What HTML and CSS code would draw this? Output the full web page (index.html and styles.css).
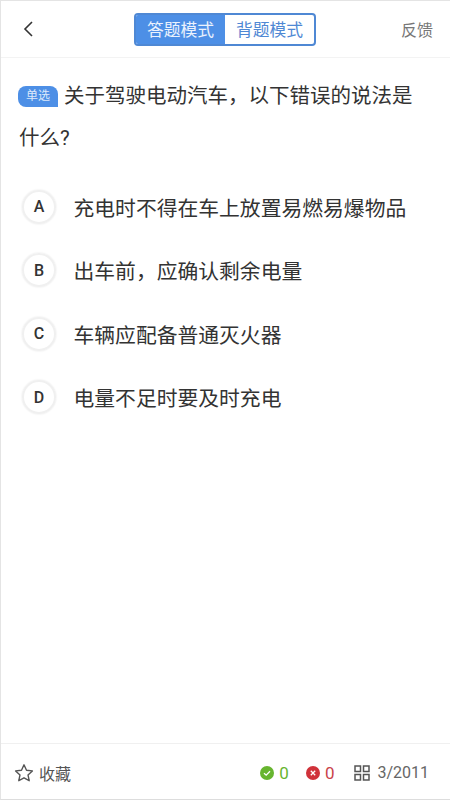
FILE: index.html
```html
<!DOCTYPE html>
<html lang="zh">

<head>
    <meta charset="UTF-8">
    <meta name="viewport" content="width=device-width, initial-scale=1.0">
    <title>答题</title>
    <link rel="stylesheet" href="styles.css">
</head>

<body>
    <div class="page">
        <div class="nav">
            <button class="back">
                <svg width="12" height="18" viewBox="0 0 12 18">
                    <path d="M10 2 L3 9 L10 16" fill="none" stroke="#333" stroke-width="1.6" />
                </svg>
            </button>
            <div class="mode">
                <span class="mode-item active">答题模式</span>
                <span class="mode-item">背题模式</span>
            </div>
            <span class="feedback">反馈</span>
        </div>

        <div class="question">
            <span class="tag">单选</span><span>关于驾驶电动汽车，以下错误的说法是</span><span>什么?</span>
        </div>

        <ul class="options">
            <li><span class="letter">A</span>充电时不得在车上放置易燃易爆物品</li>
            <li><span class="letter">B</span>出车前，应确认剩余电量</li>
            <li><span class="letter">C</span>车辆应配备普通灭火器</li>
            <li><span class="letter">D</span>电量不足时要及时充电</li>
        </ul>

        <div class="footer">
            <div class="collect">
                <svg width="20" height="20" viewBox="0 0 20 20">
                    <path d="M10 1.8 L12.5 7.2 L18.4 7.9 L14 11.9 L15.2 17.7 L10 14.8 L4.8 17.7 L6 11.9 L1.6 7.9 L7.5 7.2 Z" fill="none" stroke="#555" stroke-width="1.4" stroke-linejoin="round" />
                </svg>
                <span>收藏</span>
            </div>
            <div class="stats">
                <span class="stat right">
                    <svg width="14" height="14" viewBox="0 0 14 14">
                        <circle cx="7" cy="7" r="7" fill="#67b52f" />
                        <path d="M4 7.2 L6.2 9.2 L10 5.2" fill="none" stroke="#fff" stroke-width="1.3" />
                    </svg>
                    0
                </span>
                <span class="stat wrong">
                    <svg width="14" height="14" viewBox="0 0 14 14">
                        <circle cx="7" cy="7" r="7" fill="#d0323a" />
                        <path d="M4.8 4.8 L9.2 9.2 M9.2 4.8 L4.8 9.2" fill="none" stroke="#fff" stroke-width="1.3" />
                    </svg>
                    0
                </span>
                <span class="stat total">
                    <svg width="16" height="16" viewBox="0 0 16 16">
                        <rect x="1" y="1" width="5.5" height="5.5" fill="none" stroke="#555" stroke-width="1.5" />
                        <rect x="9.5" y="1" width="5.5" height="5.5" fill="none" stroke="#555" stroke-width="1.5" />
                        <rect x="1" y="9.5" width="5.5" height="5.5" fill="none" stroke="#555" stroke-width="1.5" />
                        <rect x="9.5" y="9.5" width="5.5" height="5.5" fill="none" stroke="#555" stroke-width="1.5" />
                    </svg>
                    3/2011
                </span>
            </div>
        </div>
    </div>
</body>

</html>
```

FILE: styles.css
```css
ul {
    padding: 0;
    margin: 0;
    list-style: none;
}

button {
    border: 0;
    outline: none;
    padding: 0;
    background: none;
}

body {
    margin: 0;
    font-family: Roboto, "Noto Sans CJK SC", sans-serif;
    color: #333;
}

.page {
    height: 800px;
    box-sizing: border-box;
    display: flex;
    flex-direction: column;
    background-color: #fff;
    border-left: 1px solid #e4e4e4;
    border-top: 1px solid #e4e4e4;
    border-bottom: 1px solid #ddd;
}

.nav {
    height: 56px;
    flex-shrink: 0;
    display: flex;
    align-items: center;
    justify-content: space-between;
    padding: 0 17px 0 21px;
    border-bottom: 1px solid #f3f3f3;
}

.back {
    width: 14px;
    display: flex;
}

.mode {
    display: flex;
    width: 182px;
    height: 33px;
    box-sizing: border-box;
    margin-left: 13px;
    border: 2px solid #4f88d4;
    border-radius: 4px;
    overflow: hidden;
}

.mode-item {
    flex: 1;
    display: flex;
    align-items: center;
    justify-content: center;
    font-size: 16.8px;
    color: #4f88d4;
}

.mode-item.active {
    background-color: #4d8fe6;
    color: #eaf2fd;
}

.feedback {
    font-size: 16px;
    color: #777;
}

.question {
    padding: 17px 30px 0 18px;
    font-size: 20.5px;
    line-height: 42px;
}

.tag {
    display: inline-block;
    width: 40px;
    height: 21px;
    margin: 0 6px 0 -1px;
    background-color: #4d8fe6;
    border-radius: 8px 8px 0 8px;
    color: #dce9fb;
    font-size: 12px;
    line-height: 21px;
    text-align: center;
    vertical-align: 3px;
}

.options {
    padding: 16px 0 0 21px;
}

.options li {
    height: 63.5px;
    display: flex;
    align-items: center;
    font-size: 20.8px;
}

.letter {
    width: 34px;
    height: 34px;
    margin-right: 17.5px;
    display: flex;
    align-items: center;
    justify-content: center;
    box-sizing: border-box;
    border: 2px solid #f0f0f0;
    border-radius: 50%;
    font-size: 16px;
    font-weight: 500;
    color: #333;
    box-shadow: 0 0 2px #e2e2e2;
}

.footer {
    margin-top: auto;
    height: 56px;
    box-sizing: border-box;
    flex-shrink: 0;
    display: flex;
    align-items: center;
    justify-content: space-between;
    padding: 2px 21px 0 13px;
    border-top: 1px solid #f0f0f0;
}

.collect {
    display: flex;
    align-items: center;
    gap: 5px;
    font-size: 16px;
    color: #555;
}

.stats {
    display: flex;
    align-items: center;
    gap: 17px;
    font-size: 17px;
}

.stat {
    display: flex;
    align-items: center;
    gap: 5px;
}

.right {
    color: #67b52f;
}

.wrong {
    color: #c9434a;
}

.total {
    margin-left: 3px;
    gap: 7px;
    font-size: 16px;
    color: #666;
}
```
